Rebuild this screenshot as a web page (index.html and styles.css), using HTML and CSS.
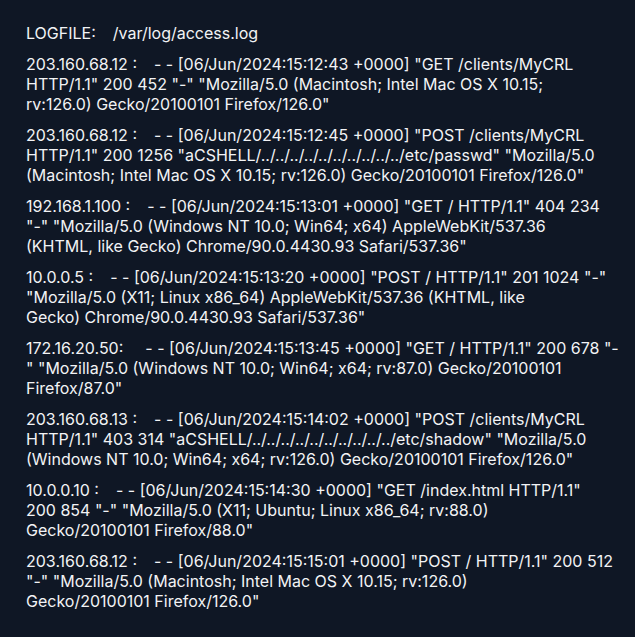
FILE: index.html
```
<!DOCTYPE html>
<html lang="en">
<head>
<meta charset="utf-8">
<title>Access log</title>
<link rel="stylesheet" href="styles.css">
</head>
<body>
<main class="log">
  <div class="head"><span class="label">LOGFILE:</span><span class="gap"></span><span class="path">/var/log/access.log</span></div>

  <div class="entry">
    <span class="ln">203.160.68.12 :<span class="gap"></span>- - [06/Jun/2024:15:12:43 +0000] "GET /clients/MyCRL</span>
    <span class="ln">HTTP/1.1" 200 452 "-" "Mozilla/5.0 (Macintosh; Intel Mac OS X 10.15;</span>
    <span class="ln">rv:126.0) Gecko/20100101 Firefox/126.0"</span>
  </div>

  <div class="entry">
    <span class="ln">203.160.68.12 :<span class="gap"></span>- - [06/Jun/2024:15:12:45 +0000] "POST /clients/MyCRL</span>
    <span class="ln">HTTP/1.1" 200 1256 "aCSHELL/../../../../../../../../../../etc/passwd" "Mozilla/5.0</span>
    <span class="ln">(Macintosh; Intel Mac OS X 10.15; rv:126.0) Gecko/20100101 Firefox/126.0"</span>
  </div>

  <div class="entry">
    <span class="ln">192.168.1.100 :<span class="gap"></span>- - [06/Jun/2024:15:13:01 +0000] "GET / HTTP/1.1" 404 234</span>
    <span class="ln">"-" "Mozilla/5.0 (Windows NT 10.0; Win64; x64) AppleWebKit/537.36</span>
    <span class="ln">(KHTML, like Gecko) Chrome/90.0.4430.93 Safari/537.36"</span>
  </div>

  <div class="entry">
    <span class="ln">10.0.0.5 :<span class="gap"></span>- - [06/Jun/2024:15:13:20 +0000] "POST / HTTP/1.1" 201 1024 "-"</span>
    <span class="ln">"Mozilla/5.0 (X11; Linux x86_64) AppleWebKit/537.36 (KHTML, like</span>
    <span class="ln">Gecko) Chrome/90.0.4430.93 Safari/537.36"</span>
  </div>

  <div class="entry">
    <span class="ln">172.16.20.50:<span class="gap wide"></span>- - [06/Jun/2024:15:13:45 +0000] "GET / HTTP/1.1" 200 678 "-</span>
    <span class="ln">" "Mozilla/5.0 (Windows NT 10.0; Win64; x64; rv:87.0) Gecko/20100101</span>
    <span class="ln">Firefox/87.0"</span>
  </div>

  <div class="entry">
    <span class="ln">203.160.68.13 :<span class="gap"></span>- - [06/Jun/2024:15:14:02 +0000] "POST /clients/MyCRL</span>
    <span class="ln">HTTP/1.1" 403 314 "aCSHELL/../../../../../../../../../../etc/shadow" "Mozilla/5.0</span>
    <span class="ln">(Windows NT 10.0; Win64; x64; rv:126.0) Gecko/20100101 Firefox/126.0"</span>
  </div>

  <div class="entry">
    <span class="ln">10.0.0.10 :<span class="gap"></span>- - [06/Jun/2024:15:14:30 +0000] "GET /index.html HTTP/1.1"</span>
    <span class="ln">200 854 "-" "Mozilla/5.0 (X11; Ubuntu; Linux x86_64; rv:88.0)</span>
    <span class="ln">Gecko/20100101 Firefox/88.0"</span>
  </div>

  <div class="entry">
    <span class="ln">203.160.68.12 :<span class="gap"></span>- - [06/Jun/2024:15:15:01 +0000] "POST / HTTP/1.1" 200 512</span>
    <span class="ln">"-" "Mozilla/5.0 (Macintosh; Intel Mac OS X 10.15; rv:126.0)</span>
    <span class="ln">Gecko/20100101 Firefox/126.0"</span>
  </div>
</main>
</body>
</html>
```
FILE: styles.css
```
html, body {
  margin: 0;
  background: #0f1725;
}

body {
  color: #f2f3f5;
  font-family: Inter, "Open Sans", "DejaVu Sans", sans-serif;
  font-size: 16px;
  line-height: 20px;
  letter-spacing: 0;
}

.log {
  display: flex;
  flex-direction: column;
  gap: 11px;
  padding: 23px 0 0 26px;
}

.head {
  white-space: pre;
}

.entry {
  display: flex;
  flex-direction: column;
}

.ln {
  display: block;
  white-space: pre;
}

.gap {
  display: inline-block;
  width: 17px;
}

.gap.wide {
  width: 22px;
}
```
